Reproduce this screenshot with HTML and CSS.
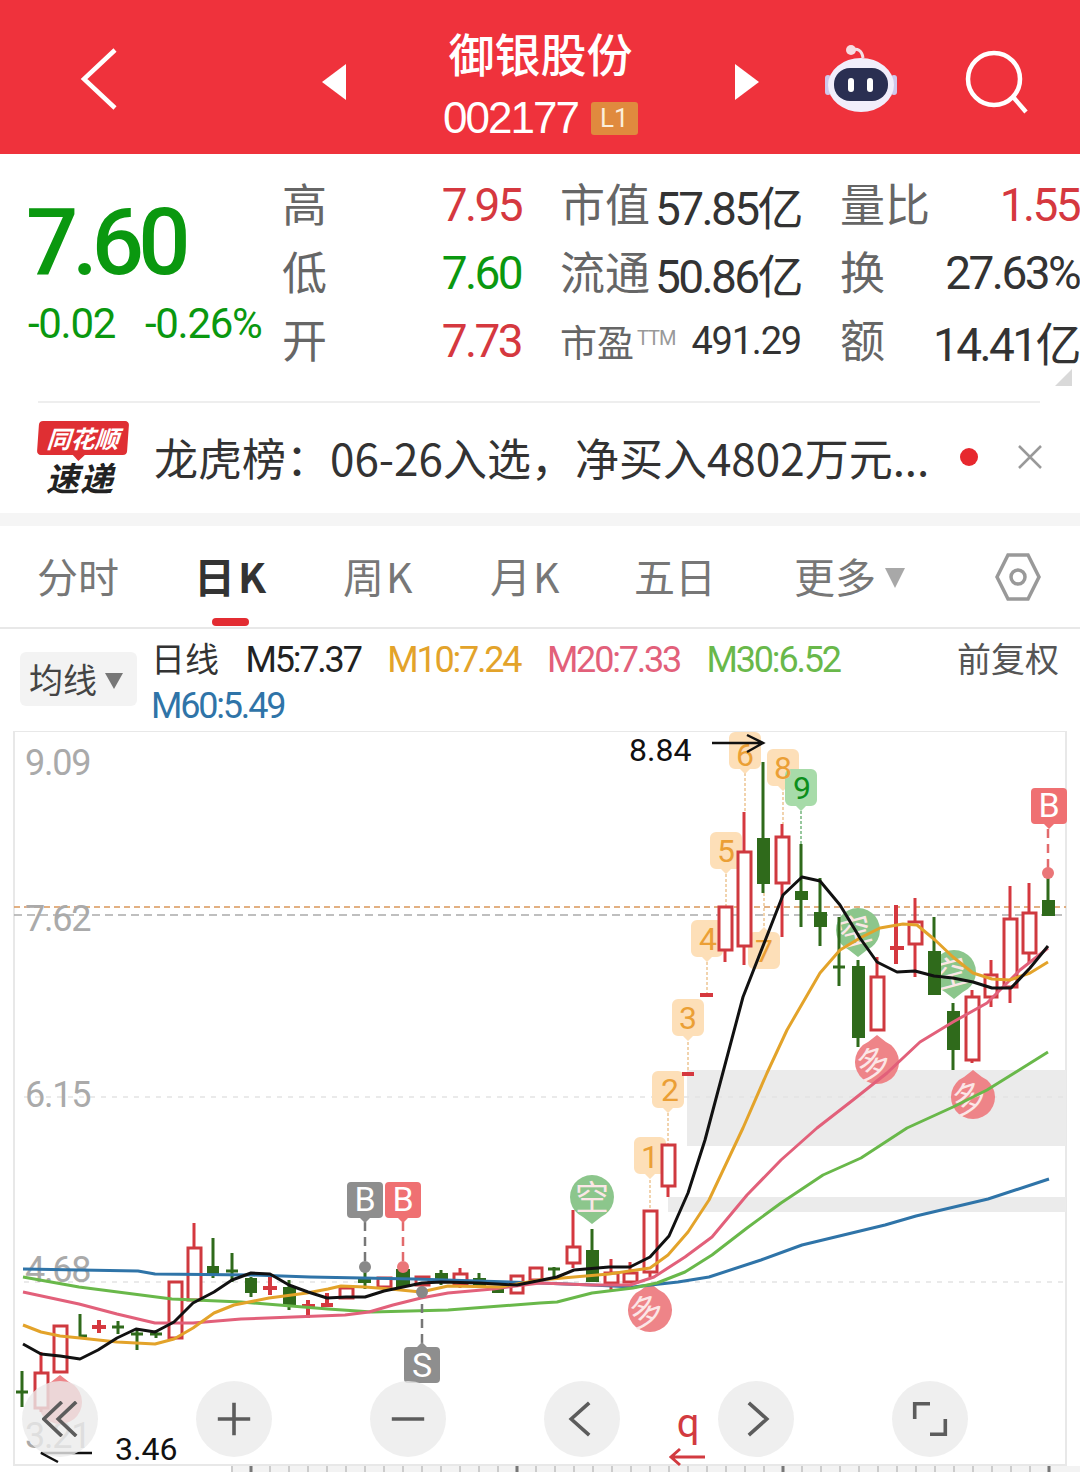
FILE: index.html
```html
<!DOCTYPE html>
<html lang="zh-CN">
<head>
    <meta charset="UTF-8">
    <meta name="viewport" content="width=device-width, initial-scale=1.0">
    <title>御银股份 002177</title>
    <link rel="stylesheet" href="styles.css">
</head>
<body>
<div class="app">

    <header class="topbar">
        <svg class="icon-back" viewBox="0 0 40 64"><path d="M35 3 4 32l31 29"/></svg>
        <svg class="icon-prev" viewBox="0 0 24 36"><path d="M24 0v36L0 18z"/></svg>
        <div class="title">
            <div class="title-name">御银股份</div>
            <div class="title-code">002177<span class="badge-l1">L1</span></div>
        </div>
        <svg class="icon-next" viewBox="0 0 24 36"><path d="M0 0v36l24-18z"/></svg>
        <svg class="icon-robot" viewBox="0 0 76 68">
            <path class="robot-wire" d="M29 5c5-2 10 0 11 8"/>
            <circle class="robot-ball" cx="28" cy="5" r="5"/>
            <rect class="robot-ear" x="2" y="30" width="6" height="20" rx="3"/>
            <rect class="robot-ear" x="68" y="30" width="6" height="20" rx="3"/>
            <ellipse class="robot-head" cx="38" cy="40" rx="33" ry="27"/>
            <rect class="robot-face" x="11" y="23" width="54" height="33" rx="16"/>
            <rect class="robot-eye" x="25" y="33" width="6" height="14" rx="3"/>
            <rect class="robot-eye" x="44" y="33" width="6" height="14" rx="3"/>
        </svg>
        <svg class="icon-search" viewBox="0 0 64 64"><circle cx="29" cy="29" r="26"/><path d="M49 48l12 14"/></svg>
    </header>

    <section class="quote">
        <div class="price">
            <div class="price-now">7.60</div>
            <div class="price-change"><span>-0.02</span><span>-0.26%</span></div>
        </div>
        <div class="stats">
            <div class="stat"><span class="stat-label">高</span><span class="stat-value num-up">7.95</span></div>
            <div class="stat"><span class="stat-label">市值</span><span class="stat-value">57.85亿</span></div>
            <div class="stat"><span class="stat-label">量比</span><span class="stat-value num-up">1.55</span></div>
            <div class="stat"><span class="stat-label">低</span><span class="stat-value num-down">7.60</span></div>
            <div class="stat"><span class="stat-label">流通</span><span class="stat-value">50.86亿</span></div>
            <div class="stat"><span class="stat-label">换</span><span class="stat-value">27.63%</span></div>
            <div class="stat"><span class="stat-label">开</span><span class="stat-value num-up">7.73</span></div>
            <div class="stat"><span class="stat-label stat-label-sm">市盈<sup>TTM</sup></span><span class="stat-value stat-value-sm">491.29</span></div>
            <div class="stat"><span class="stat-label">额</span><span class="stat-value">14.41亿</span></div>
        </div>
        <div class="corner"></div>
    </section>

    <section class="news">
        <div class="news-logo">
            <div class="news-logo-top">同花顺</div>
            <div class="news-logo-bottom">速递</div>
        </div>
        <div class="news-text">龙虎榜：06-26入选，净买入4802万元...</div>
        <span class="news-dot"></span>
        <svg class="news-close" viewBox="0 0 26 26"><path d="M2 2l22 22M24 2 2 24"/></svg>
    </section>

    <nav class="tabs">
        <span class="tab tab-fs">分时</span>
        <span class="tab tab-day">日K</span>
        <span class="tab tab-week">周K</span>
        <span class="tab tab-month">月K</span>
        <span class="tab tab-five">五日</span>
        <span class="tab tab-more">更多<i class="tri"></i></span>
        <svg class="icon-hex" viewBox="0 0 48 50"><path d="M14 3h20l11 22-11 22H14L3 25z"/><circle cx="24" cy="25" r="7"/></svg>
    </nav>

    <section class="legend">
        <div class="legend-select">均线<i class="tri tri-dark"></i></div>
        <div class="legend-values">
            <span class="legend-name">日线</span>
            <span class="ma ma5">M5:7.37</span>
            <span class="ma ma10">M10:7.24</span>
            <span class="ma ma20">M20:7.33</span>
            <span class="ma ma30">M30:6.52</span>
            <span class="ma ma60">M60:5.49</span>
        </div>
        <div class="legend-adjust">前复权</div>
    </section>

    <section class="chart">
        <svg class="chart-svg" viewBox="0 731 1080 741">
            <defs>
                <path id="tag" d="M-10-19h20a6 6 0 0 1 6 6v25a6 6 0 0 1-6 6h-5l-5 5-5-5h-5a6 6 0 0 1-6-6v-25a6 6 0 0 1 6-6z"/>
                <path id="flag" d="M-14-18h28a4 4 0 0 1 4 4v28a4 4 0 0 1-4 4h-9l-5 5-5-5h-9a4 4 0 0 1-4-4v-28a4 4 0 0 1 4-4z"/>
                <path id="pin" d="M0-27 9-20A22 22 0 1 1-9-20z"/>
            </defs>

            <!-- boxes and grid -->
            <rect class="frame" x="14" y="731" width="1052" height="734"/>
            <rect class="zone" x="687" y="1070" width="379" height="76"/>
            <rect class="zone" x="668" y="1197" width="398" height="15"/>
            <path class="grid" d="M24 1097H1066M24 1282H1066"/>
            <path class="line-now" d="M14 907H1066"/>
            <path class="line-prev" d="M14 915H1066"/>

            <!-- axis -->
            <text class="axis" x="25" y="775">9.09</text>
            <text class="axis" x="25" y="931">7.62</text>
            <text class="axis" x="25" y="1107">6.15</text>
            <text class="axis" x="25" y="1282">4.68</text>
            <text class="axis" x="25" y="1448">3.21</text>

            <!-- signal pins -->
            <g class="pin-red">
                <use href="#pin" x="877" y="1062"/>
                <use href="#pin" x="973" y="1097"/>
                <use href="#pin" x="650" y="1310"/>
                <use href="#pin" x="60" y="1402"/>
            </g>
            <g class="pin-green">
                <use href="#pin" transform="translate(592 1197) scale(1 -1)"/>
                <use href="#pin" transform="translate(858 930) scale(1 -1)"/>
                <use href="#pin" transform="translate(954 972) scale(1 -1)"/>
            </g>
            <g class="pin-text">
                <text transform="translate(877 1075) rotate(-18)">多</text>
                <text transform="translate(973 1110) rotate(-18)">多</text>
                <text transform="translate(650 1323) rotate(-18)">多</text>
                <text transform="translate(592 1210)">空</text>
                <text transform="translate(858 943) rotate(-15)">空</text>
                <text transform="translate(954 985) rotate(-15)">空</text>
            </g>

            <!-- tags over the rising run -->
            <path class="dash-orange" d="M745 773V812M726 874V907M707 962V995M688 1042V1074M668 1113V1145M650 1180V1211M783 792V824M764 893V927"/>
            <path class="dash-green" d="M801 811V844"/>
            <g class="tag-orange">
                <use href="#tag" x="650" y="1156"/>
                <use href="#tag" x="668" y="1090"/>
                <use href="#tag" x="688" y="1018"/>
                <use href="#tag" x="707" y="939"/>
                <use href="#tag" x="726" y="851"/>
                <use href="#tag" x="745" y="751"/>
                <use href="#tag" transform="translate(764 950) scale(1 -1)"/>
                <use href="#tag" x="783" y="768"/>
            </g>
            <use class="tag-green" href="#tag" x="801" y="788"/>
            <g class="tag-num">
                <text x="650" y="1168">1</text>
                <text x="670" y="1101">2</text>
                <text x="688" y="1029">3</text>
                <text x="708" y="950">4</text>
                <text x="726" y="862">5</text>
                <text x="745" y="766">6</text>
                <text x="764" y="962">7</text>
                <text x="783" y="779">8</text>
                <text class="tag-num-green" x="802" y="799">9</text>
            </g>

            <!-- red candles -->
            <g class="candle-up">
                <path d="M41 1352v60M194 1223v30M573 1210v58M611 1259v31M630 1262v21M650 1211v66M668 1145v52M725 907v55M744 812v153M782 824v113M877 957v73M915 898v79M972 990v73M991 960v47M1010 886v117M1029 883v80M422 1277v10M460 1268v20M517 1276v18M535 1268v12M175 1282v56M346 1288v10M384 1278v9"/>
                <rect x="35" y="1373" width="13" height="35"/>
                <rect x="54" y="1326" width="13" height="46"/>
                <rect x="169" y="1282" width="13" height="56"/>
                <rect x="188" y="1248" width="13" height="52"/>
                <rect x="340" y="1288" width="13" height="10"/>
                <rect x="378" y="1278" width="13" height="9"/>
                <rect x="416" y="1277" width="13" height="8"/>
                <rect x="454" y="1274" width="13" height="11"/>
                <rect x="511" y="1276" width="12" height="17"/>
                <rect x="530" y="1268" width="12" height="12"/>
                <rect x="567" y="1247" width="13" height="16"/>
                <rect x="605" y="1273" width="13" height="10"/>
                <rect x="624" y="1273" width="13" height="9"/>
                <rect x="644" y="1211" width="13" height="61"/>
                <rect x="662" y="1145" width="13" height="41"/>
                <rect x="719" y="907" width="13" height="43"/>
                <rect x="738" y="852" width="13" height="94"/>
                <rect x="776" y="837" width="13" height="46"/>
                <rect x="871" y="977" width="13" height="53"/>
                <rect x="909" y="922" width="13" height="22"/>
                <rect x="966" y="997" width="13" height="63"/>
                <rect x="985" y="975" width="12" height="22"/>
                <rect x="1004" y="919" width="13" height="68"/>
                <rect x="1023" y="913" width="13" height="40"/>
            </g>
            <path class="candle-flat-up" d="M92 1327h14M99 1320v13M263 1288h14M270 1275v20M302 1306h13M308 1300v18M321 1305h12M327 1293v14M890 948h14M896 905v59M700 995h13M682 1074h12"/>

            <!-- green candles -->
            <path class="candle-flat-down" d="M16 1392h12M22 1371v36M80 1314v22h7M112 1327h12M118 1321v13M131 1334h12M137 1330v20M150 1334h12M156 1330v8M226 1271h12M232 1253v29M548 1269h12M554 1267v11M833 967h12M839 917v69M801 844v83M763 762v131M820 878v68M858 960v87M934 917v78M953 1003v67M1048 873v30M213 1238v40M251 1277v20M289 1280v30M365 1268v21M441 1270v15M479 1273v15M592 1229v21M403 1262v12"/>
            <g class="candle-down">
                <rect x="207" y="1266" width="12" height="9"/>
                <rect x="245" y="1278" width="12" height="15"/>
                <rect x="283" y="1287" width="13" height="18"/>
                <rect x="358" y="1277" width="13" height="6"/>
                <rect x="396" y="1269" width="14" height="18"/>
                <rect x="435" y="1273" width="13" height="9"/>
                <rect x="473" y="1278" width="13" height="9"/>
                <rect x="492" y="1288" width="12" height="5"/>
                <rect x="586" y="1250" width="13" height="32"/>
                <rect x="757" y="838" width="13" height="46"/>
                <rect x="795" y="891" width="13" height="9"/>
                <rect x="814" y="912" width="13" height="15"/>
                <rect x="852" y="966" width="13" height="72"/>
                <rect x="928" y="951" width="13" height="44"/>
                <rect x="947" y="1011" width="13" height="39"/>
                <rect x="1042" y="900" width="13" height="16"/>
            </g>

            <!-- moving averages -->
            <path class="ma-line line60" d="M23 1269 138 1271 155 1274 252 1275 310 1277 414 1279 540 1283 592 1285 633 1287 678 1282 709 1277 761 1260 802 1245 885 1225 916 1216 988 1199 1049 1179"/>
            <path class="ma-line line30" d="M23 1277 79 1287 172 1299 241 1302 328 1309 372 1312 448 1310 540 1303 557 1302 592 1293 633 1288 657 1283 685 1272 712 1255 747 1228 781 1203 823 1175 861 1158 907 1128 953 1107 987 1090 1048 1052"/>
            <path class="ma-line line20" d="M23 1292 79 1304 117 1314 155 1323 193 1323 241 1319 293 1317 345 1315 369 1312 393 1305 421 1298 448 1293 493 1289 540 1283 592 1285 630 1285 654 1277 685 1257 712 1237 747 1195 781 1160 817 1128 853 1100 887 1073 920 1042 953 1022 987 1003 1020 970 1048 948"/>
            <path class="ma-line line10" d="M23 1325 41 1332 60 1336 80 1338 117 1342 155 1344 174 1339 193 1328 214 1313 234 1305 269 1298 307 1293 328 1289 341 1286 365 1287 390 1289 421 1292 448 1286 500 1287 540 1280 574 1277 609 1274 650 1268 668 1255 688 1232 709 1200 743 1128 767 1073 787 1030 820 973 840 950 860 938 880 928 903 924 917 925 935 940 953 957 973 973 992 979 1010 980 1030 973 1048 962"/>
            <path class="ma-line line5" d="M23 1344 41 1354 60 1356 80 1359 98 1350 117 1338 136 1329 155 1332 174 1322 193 1303 214 1292 232 1280 251 1273 270 1274 289 1285 308 1292 327 1298 346 1297 365 1297 384 1291 403 1287 422 1283 441 1282 479 1283 517 1285 557 1277 574 1270 609 1267 630 1267 650 1257 669 1236 688 1193 705 1140 743 997 783 895 802 877 820 881 840 905 860 938 877 962 897 972 915 971 934 976 953 978 973 982 992 988 1011 988 1030 968 1048 946"/>

            <!-- buy and sell flags -->
            <path class="dash-grey" d="M365 1222V1264M422 1343V1295"/>
            <path class="dash-red" d="M403 1222V1264M1048 829V870"/>
            <circle class="dot-grey" cx="365" cy="1267" r="6"/>
            <circle class="dot-grey" cx="422" cy="1292" r="6"/>
            <circle class="dot-red" cx="403" cy="1267" r="6"/>
            <circle class="dot-red" cx="1048" cy="873" r="6"/>
            <use class="flag-grey" href="#flag" x="365" y="1200"/>
            <use class="flag-red" href="#flag" x="403" y="1200"/>
            <use class="flag-red" href="#flag" x="1049" y="806"/>
            <use class="flag-grey" href="#flag" transform="translate(422 1365) scale(1 -1)"/>
            <g class="flag-text">
                <text x="365" y="1211">B</text>
                <text x="403" y="1211">B</text>
                <text x="1049" y="817">B</text>
                <text x="422" y="1377">S</text>
            </g>

            <!-- high and low marks -->
            <text class="extreme" x="629" y="761">8.84</text>
            <path class="extreme-arrow" d="M712 743H763M747 735l16 8-16 9"/>
            <text class="extreme" x="115" y="1460">3.46</text>
            <path class="extreme-arrow" d="M92 1453H41l17 9"/>
            <text class="mark-q" x="688" y="1437">q</text>
            <path class="mark-q-arrow" d="M705 1457H671M680 1449l-9 8 9 8"/>

            <rect class="tick-band" x="232" y="1466" width="848" height="6"/>
            <path class="ticks" d="M232 1466v6M270 1466v6M289 1466v6M308 1466v6M327 1466v6M346 1466v6M365 1466v6M384 1466v6M403 1466v6M422 1466v6M441 1466v6M460 1466v6M479 1466v6M498 1466v6M536 1466v6M555 1466v6M574 1466v6M593 1466v6M612 1466v6M631 1466v6M650 1466v6M669 1466v6M688 1466v6M707 1466v6M726 1466v6M745 1466v6M764 1466v6M802 1466v6M821 1466v6M840 1466v6M859 1466v6M878 1466v6M897 1466v6M916 1466v6M935 1466v6M954 1466v6M973 1466v6M992 1466v6M1011 1466v6M1030 1466v6"/>
            <path class="ticks-major" d="M251 1466v6M517 1466v6M783 1466v6M1049 1466v6"/>
        </svg>

        <div class="chart-tools">
            <button class="tool"><svg viewBox="0 0 40 40"><path d="M22 1 2 20l20 19M38 1 18 20l20 19"/></svg></button>
            <button class="tool"><svg viewBox="0 0 40 40"><path d="M2 20H38M20 2V38"/></svg></button>
            <button class="tool"><svg viewBox="0 0 40 40"><path d="M2 20H38"/></svg></button>
            <button class="tool"><svg viewBox="0 0 40 40"><path d="M28 2 8 20l20 18"/></svg></button>
            <button class="tool"><svg viewBox="0 0 40 40"><path d="M12 2 32 20 12 38"/></svg></button>
            <button class="tool"><svg viewBox="0 0 40 40"><path d="M3 20V3H20M37 20V37H20"/></svg></button>
        </div>
    </section>

</div>
</body>
</html>
```

FILE: styles.css
```css
/* Общие стили */
body {
    margin: 0;
    background-color: #fff;
    font-family: Roboto, "Noto Sans CJK SC", sans-serif;
    color: #333;
}

.app {
    width: 1080px;
    height: 1472px;
    overflow: hidden;
}

/* Шапка */
.topbar {
    position: relative;
    height: 154px;
    background-color: #ef323c;
    display: flex;
    align-items: center;
    color: #fff;
}

.icon-back {
    width: 40px;
    height: 64px;
    margin: 4px 0 0 80px;
}

.icon-back path {
    fill: none;
    stroke: #fff;
    stroke-width: 4.5;
}

.icon-prev,
.icon-next {
    width: 24px;
    height: 36px;
    margin-top: 10px;
    fill: #fff;
}

.icon-prev {
    margin-left: 202px;
}

.title {
    width: 389px;
    align-self: flex-start;
    padding-top: 24px;
    text-align: center;
}

.title-name {
    font-family: "Noto Sans CJK SC", sans-serif;
    font-size: 46px;
    font-weight: 500;
    line-height: 56px;
}

.title-code {
    font-family: "Liberation Sans", sans-serif;
    font-size: 44px;
    line-height: 46px;
    margin-top: 15px;
    letter-spacing: -2px;
    display: flex;
    justify-content: center;
    align-items: center;
}

.badge-l1 {
    margin-left: 13px;
    width: 47px;
    height: 33px;
    line-height: 33px;
    font-family: Roboto, sans-serif;
    font-size: 26px;
    letter-spacing: 0;
    background-color: #e08a3e;
    border-radius: 3px;
    color: #fbeedc;
}

.icon-robot {
    width: 76px;
    height: 68px;
    margin-left: 64px;
    margin-top: 4px;
}

.robot-wire {
    fill: none;
    stroke: #f3dfe6;
    stroke-width: 3;
}

.robot-ball { fill: #f6dce2; }
.robot-ear { fill: #cfc8ec; }
.robot-head { fill: #f1eefb; }
.robot-face { fill: #2a2f52; }
.robot-eye { fill: #fff; }

.icon-search {
    width: 64px;
    height: 64px;
    margin-left: 66px;
    margin-top: 10px;
    fill: none;
    stroke: #fff;
    stroke-width: 4.5;
}

/* Котировка */
.quote {
    position: relative;
    height: 247px;
    display: flex;
    box-sizing: border-box;
    padding: 17px 2px 0 28px;
}

.price {
    width: 255px;
    flex-shrink: 0;
    color: #0a980f;
}

.price-now {
    font-size: 92px;
    line-height: 100px;
    margin-top: 22px;
    margin-left: -2px;
    letter-spacing: -6px;
    font-weight: 500;
}

.price-change {
    margin-top: 9px;
    font-size: 42px;
    line-height: 44px;
    letter-spacing: -1.3px;
    display: flex;
    gap: 30px;
    white-space: nowrap;
}

.stats {
    width: 795px;
    display: grid;
    grid-template-columns: 238px 240px 238px;
    column-gap: 40px;
    grid-auto-rows: 68px;
}

.stat {
    display: flex;
    justify-content: space-between;
    align-items: center;
}

.stat-label {
    font-family: "Noto Sans CJK SC", sans-serif;
    font-size: 45px;
    margin-top: -5px;
    margin-left: -1px;
    color: #666;
    white-space: nowrap;
}

.stat-label-sm {
    font-size: 37px;
    margin-top: 0;
}

.stat-label-sm sup {
    font-family: Roboto, sans-serif;
    font-size: 20px;
    letter-spacing: -1px;
    color: #999;
    margin-left: 3px;
    vertical-align: 12px;
    line-height: 0;
}

.stat-value {
    font-family: Roboto, "Noto Sans CJK SC", sans-serif;
    font-size: 46px;
    letter-spacing: -2.6px;
    color: #333;
    white-space: nowrap;
}

.stat-value-sm {
    font-size: 38px;
    letter-spacing: -1.2px;
}

.num-up { color: #d5383f; }
.num-down { color: #0a980f; }

.corner {
    position: absolute;
    right: 8px;
    bottom: 15px;
    width: 0;
    height: 0;
    border-style: solid;
    border-width: 0 0 17px 17px;
    border-color: transparent transparent #d9d9d9 transparent;
}

/* Новость */
.news {
    height: 112px;
    display: flex;
    align-items: center;
    position: relative;
}

.news::before {
    content: "";
    position: absolute;
    top: 0;
    left: 38px;
    right: 40px;
    height: 2px;
    background-color: #eee;
}

.news-logo {
    margin-left: 38px;
    width: 90px;
    margin-top: 2px;
    text-align: center;
    font-family: "Noto Sans CJK SC", sans-serif;
    font-style: italic;
    font-weight: 700;
}

.news-logo-top {
    position: relative;
    height: 34px;
    line-height: 33px;
    background-color: #df2f33;
    border-radius: 4px;
    color: #fff;
    font-size: 24px;
    transform: skewX(-4deg);
    white-space: nowrap;
}

.news-logo-top::after {
    content: "";
    position: absolute;
    left: 36px;
    bottom: -6px;
    border-style: solid;
    border-width: 6px 6px 0 6px;
    border-color: #df2f33 transparent transparent transparent;
}

.news-logo-bottom {
    font-size: 33px;
    line-height: 36px;
    margin-top: 4px;
    margin-left: -6px;
    color: #222;
    letter-spacing: 1px;
}

.news-text {
    margin-left: 26px;
    width: 790px;
    font-family: "Noto Sans CJK SC", sans-serif;
    font-size: 44px;
    color: #333;
    white-space: nowrap;
}

.news-dot {
    width: 18px;
    height: 18px;
    border-radius: 50%;
    background-color: #e7282e;
    margin-left: 16px;
}

.news-close {
    width: 26px;
    height: 26px;
    margin-left: 39px;
    fill: none;
    stroke: #999;
    stroke-width: 2.5;
}

/* Вкладки */
.tabs {
    position: relative;
    border-top: 13px solid #f5f5f5;
    height: 101px;
    border-bottom: 2px solid #e8e8e8;
    font-family: "Noto Sans CJK SC", sans-serif;
    font-size: 41px;
    color: #777;
}

.tab {
    position: absolute;
    top: 21px;
    line-height: 56px;
    white-space: nowrap;
}

.tab-fs { left: 37px; }
.tab-week { left: 343px; letter-spacing: 2px; }
.tab-month { left: 490px; letter-spacing: 2px; }
.tab-five { left: 634px; }
.tab-more { left: 794px; }

.tab-day {
    left: 194px;
    font-weight: 700;
    color: #333;
    letter-spacing: 3px;
}

.tab-day::after {
    content: "";
    position: absolute;
    left: 18px;
    top: 71px;
    width: 37px;
    height: 8px;
    border-radius: 4px;
    background-color: #e32c32;
}

.tri {
    display: inline-block;
    margin-left: 9px;
    vertical-align: 5px;
    border-style: solid;
    border-width: 20px 10px 0 10px;
    border-color: #a8a8a8 transparent transparent transparent;
}

.tri-dark {
    margin-left: 8px;
    vertical-align: 4px;
    border-width: 16px 9px 0 9px;
    border-color: #777 transparent transparent transparent;
}

.icon-hex {
    position: absolute;
    left: 994px;
    top: 26px;
    width: 48px;
    height: 50px;
    fill: none;
    stroke: #999;
    stroke-width: 3.5;
}

/* Легенда */
.legend {
    position: relative;
    height: 102px;
    font-size: 36px;
}

.legend-select {
    position: absolute;
    left: 20px;
    top: 23px;
    width: 117px;
    height: 54px;
    box-sizing: border-box;
    padding-left: 9px;
    line-height: 54px;
    background-color: #f3f3f3;
    border-radius: 6px;
    font-family: "Noto Sans CJK SC", sans-serif;
    font-size: 34px;
    color: #444;
    white-space: nowrap;
}

.legend-values {
    position: absolute;
    left: 151px;
    top: 8px;
    width: 720px;
    display: flex;
    flex-wrap: wrap;
    column-gap: 26.5px;
    line-height: 46px;
}

.legend-name {
    font-family: "Noto Sans CJK SC", sans-serif;
    font-size: 34px;
    color: #333;
    margin-top: -2px;
}

.ma {
    letter-spacing: -2.2px;
    white-space: nowrap;
}

.ma5 { color: #222; }
.ma10 { color: #e3a32a; }
.ma20 { color: #e2607a; }
.ma30 { color: #69b84a; }
.ma60 { color: #2f74a8; }

.legend-adjust {
    position: absolute;
    left: 957px;
    top: 4px;
    line-height: 50px;
    font-family: "Noto Sans CJK SC", sans-serif;
    font-size: 34px;
    color: #555;
}

/* График */
.chart {
    position: relative;
    height: 741px;
}

.chart-svg {
    display: block;
    width: 1080px;
    height: 741px;
}

.frame {
    fill: none;
    stroke: #e8e8e8;
    stroke-width: 2;
}

.zone { fill: #ebebeb; }

.grid {
    stroke: #e4e4e4;
    stroke-width: 1.5;
    stroke-dasharray: 5 6;
}

.line-now {
    stroke: #d9975a;
    stroke-width: 1.5;
    stroke-dasharray: 6 4;
}

.line-prev {
    stroke: #aaa;
    stroke-width: 1.5;
    stroke-dasharray: 8 5;
}

.axis {
    font-size: 36px;
    letter-spacing: -1.2px;
    fill: #aaa;
}

.pin-red { fill: #ee8488; }
.pin-green { fill: #8cc68c; }

.pin-text text {
    font-family: "Noto Sans CJK SC", sans-serif;
    font-size: 34px;
    text-anchor: middle;
    fill: #fbe6e6;
}

.tag-orange { fill: #fddfb8; }
.tag-green { fill: #a7dba9; }

.tag-num text {
    font-size: 32px;
    text-anchor: middle;
    fill: #eb9f35;
}

.tag-num .tag-num-green { fill: #0c8f1c; }

.dash-orange {
    stroke: #e3a75c;
    stroke-width: 1;
    stroke-dasharray: 3 2;
}

.dash-green {
    stroke: #2f8f3a;
    stroke-width: 1;
    stroke-dasharray: 3 2;
}

.candle-up path,
.candle-flat-up {
    fill: none;
    stroke: #d5383f;
    stroke-width: 3;
}

.candle-flat-up { stroke-width: 4; }

.candle-up rect {
    fill: #fff;
    stroke: #cf393f;
    stroke-width: 3;
}

.candle-down rect { fill: #2f6a1b; }

.candle-flat-down {
    fill: none;
    stroke: #2f6a1b;
    stroke-width: 3;
}

.ma-line {
    fill: none;
    stroke-width: 3;
    stroke-linejoin: round;
}

.line5 { stroke: #111; }
.line10 { stroke: #e3a32a; }
.line20 { stroke: #e2607a; }
.line30 { stroke: #69b84a; }
.line60 { stroke: #2f74a8; }

.dash-grey,
.dash-red {
    stroke-width: 2.5;
    stroke-dasharray: 9 6;
}

.dash-grey { stroke: #777; }
.dash-red { stroke: #e26a6c; }
.dot-grey { fill: #888; }
.dot-red { fill: #ea7678; }
.flag-grey { fill: #8e8e8e; }
.flag-red { fill: #ef7072; }

.flag-text text {
    font-size: 34px;
    text-anchor: middle;
    fill: #fff;
}

.extreme {
    font-size: 32px;
    fill: #111;
}

.extreme-arrow {
    fill: none;
    stroke: #111;
    stroke-width: 2.5;
}

.mark-q {
    font-size: 40px;
    text-anchor: middle;
    fill: #d23a40;
}

.mark-q-arrow {
    fill: none;
    stroke: #d23a40;
    stroke-width: 3;
}

.tick-band { fill: #f3f3f3; }

.ticks {
    stroke: #ccc;
    stroke-width: 2;
}

.ticks-major {
    stroke: #777;
    stroke-width: 3;
}

.chart-tools {
    position: absolute;
    left: 22px;
    top: 650px;
    display: flex;
    gap: 98px;
}

.tool {
    width: 76px;
    height: 76px;
    padding: 0;
    border: none;
    border-radius: 50%;
    background-color: rgba(235, 235, 235, 0.8);
    display: flex;
    align-items: center;
    justify-content: center;
}

.tool svg {
    width: 36px;
    height: 36px;
    fill: none;
    stroke: #5c5c5c;
    stroke-width: 4;
}
```
